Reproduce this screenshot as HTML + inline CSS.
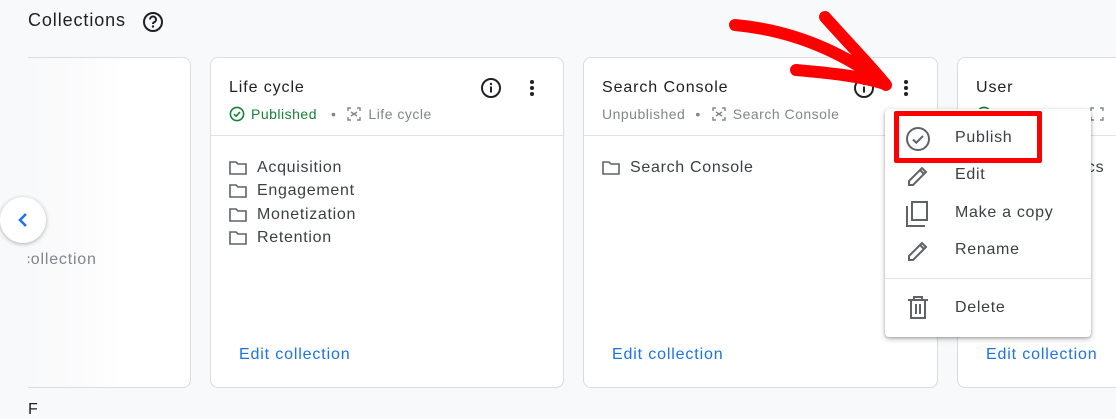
<!DOCTYPE html>
<html><head><style>
*{margin:0;padding:0;box-sizing:border-box}
body{width:1116px;height:406px;overflow:hidden;background:#f8f9fa;font-family:"Liberation Sans",Arial,sans-serif;position:relative;color:#3c4043;letter-spacing:0.6px}
.abs{position:absolute}
.card{position:absolute;top:57px;height:331px;background:#fff;border:1px solid #dadce0;border-radius:8px;overflow:hidden}
.title{position:absolute;left:18px;top:21px;font-size:16px;color:#202124;letter-spacing:0.9px}
.sub{position:absolute;left:18px;top:48px;font-size:14px;color:#80868b;white-space:nowrap;display:flex;align-items:center;letter-spacing:0.5px}
.div{position:absolute;left:0;right:0;top:77px;border-top:1px solid #e3e3e3}
.item{position:absolute;left:18px;font-size:16px;color:#3c4043;display:flex;align-items:center;letter-spacing:0.7px}
.item svg{margin-right:10px}
.edit{position:absolute;left:28px;top:288px;font-size:16px;color:#1a73e8;letter-spacing:0.85px}
.menu{position:absolute;left:885px;top:109px;width:206px;height:228px;background:#fff;border-radius:4px;box-shadow:0 2px 6px rgba(0,0,0,.25),0 1px 2px rgba(0,0,0,.2)}
.mi{position:absolute;left:70px;font-size:16px;color:#3c4043;letter-spacing:0.7px}
</style></head><body>
<div class="abs" style="left:28px;top:10px;font-size:18px;color:#202124;letter-spacing:0.9px">Collections</div>
<svg class="abs" style="left:142px;top:11px" width="22" height="22" viewBox="0 0 22 22"><circle cx="11" cy="11" r="9" fill="none" stroke="#202124" stroke-width="2"/><path d="M8 8.5a3 3 0 1 1 4 2.8c-.8.4-1 .9-1 1.7" fill="none" stroke="#202124" stroke-width="2"/><circle cx="11" cy="15.5" r="1.2" fill="#202124"/></svg>

<div class="card" style="left:0;width:191px;border-left:none;border-radius:0 8px 8px 0;background:linear-gradient(90deg,#f8f9fa 28px,#fbfbfc 80px,#fff 120px)">
<div class="abs" style="left:22px;top:193px;font-size:16px;color:#80868b;letter-spacing:0.8px">collection</div></div>
<div class="abs" style="left:0;top:0;width:28px;height:406px;background:#f8f9fa"></div>
<div class="abs" style="left:0;top:197px;width:46px;height:46px;border-radius:50%;background:#fff;box-shadow:0 1px 4px rgba(0,0,0,.3)"></div>
<svg class="abs" style="left:15px;top:211px" width="16" height="18" viewBox="0 0 16 18"><path d="M11 3 5 9l6 6" fill="none" stroke="#1a73e8" stroke-width="2.5"/></svg>

<!-- card 2 -->
<div class="card" style="left:210px;width:354px">
<div class="title">Life cycle</div>
<svg class="abs" style="left:269px;top:19px" width="22" height="22" viewBox="0 0 22 22"><circle cx="11" cy="11" r="9" fill="none" stroke="#202124" stroke-width="2"/><rect x="10" y="9.5" width="2" height="6" fill="#202124"/><circle cx="11" cy="7" r="1.2" fill="#202124"/></svg>
<svg class="abs" style="left:318px;top:21px" width="6" height="18"><circle cx="3" cy="3" r="2" fill="#202124"/><circle cx="3" cy="9" r="2" fill="#202124"/><circle cx="3" cy="15" r="2" fill="#202124"/></svg>
<div class="sub"><svg width="16" height="16" viewBox="0 0 16 16" style="margin-right:6px"><circle cx="8" cy="8" r="6.6" fill="none" stroke="#188038" stroke-width="1.6"/><path d="M5 8.2 7.1 10.2 11 6" fill="none" stroke="#188038" stroke-width="1.6"/></svg><span style="color:#188038">Published</span><span style="margin:0 10px 0 14px">•</span><svg width="16" height="16" viewBox="0 0 16 16" style="margin-right:6px"><path d="M2 5V2h3M11 2h3v3M14 11v3h-3M5 14H2v-3M5 6l6 4M11 6 5 10" fill="none" stroke="#80868b" stroke-width="1.4"/></svg>Life cycle</div>
<div class="div"></div>
<div class="item" style="top:101px"><svg width="18" height="14" viewBox="0 0 18 14"><path d="M1 1h6l2 2h8v10H1z" fill="none" stroke="#5f6368" stroke-width="1.6"/></svg>Acquisition</div>
<div class="item" style="top:124px"><svg width="18" height="14" viewBox="0 0 18 14"><path d="M1 1h6l2 2h8v10H1z" fill="none" stroke="#5f6368" stroke-width="1.6"/></svg>Engagement</div>
<div class="item" style="top:148px"><svg width="18" height="14" viewBox="0 0 18 14"><path d="M1 1h6l2 2h8v10H1z" fill="none" stroke="#5f6368" stroke-width="1.6"/></svg>Monetization</div>
<div class="item" style="top:171px"><svg width="18" height="14" viewBox="0 0 18 14"><path d="M1 1h6l2 2h8v10H1z" fill="none" stroke="#5f6368" stroke-width="1.6"/></svg>Retention</div>
<div class="edit">Edit collection</div>
</div>

<!-- card 3 -->
<div class="card" style="left:583px;width:355px">
<div class="title">Search Console</div>
<svg class="abs" style="left:269px;top:19px" width="22" height="22" viewBox="0 0 22 22"><circle cx="11" cy="11" r="9" fill="none" stroke="#202124" stroke-width="2"/><rect x="10" y="9.5" width="2" height="6" fill="#202124"/><circle cx="11" cy="7" r="1.2" fill="#202124"/></svg>
<svg class="abs" style="left:319px;top:21px" width="6" height="18"><circle cx="3" cy="3" r="2" fill="#202124"/><circle cx="3" cy="9" r="2" fill="#202124"/><circle cx="3" cy="15" r="2" fill="#202124"/></svg>
<div class="sub">Unpublished<span style="margin:0 10px">•</span><svg width="16" height="16" viewBox="0 0 16 16" style="margin-right:6px"><path d="M2 5V2h3M11 2h3v3M14 11v3h-3M5 14H2v-3M5 6l6 4M11 6 5 10" fill="none" stroke="#80868b" stroke-width="1.4"/></svg>Search Console</div>
<div class="div"></div>
<div class="item" style="top:101px"><svg width="18" height="14" viewBox="0 0 18 14"><path d="M1 1h6l2 2h8v10H1z" fill="none" stroke="#5f6368" stroke-width="1.6"/></svg>Search Console</div>
<div class="edit">Edit collection</div>
</div>

<!-- card 4 -->
<div class="card" style="left:957px;width:200px">
<div class="title">User</div>
<div class="sub"><svg width="16" height="16" viewBox="0 0 16 16" style="margin-right:6px"><circle cx="8" cy="8" r="6.6" fill="none" stroke="#188038" stroke-width="1.6"/></svg><span style="color:#188038">Published</span><span style="margin:0 10px">•</span><svg width="16" height="16" viewBox="0 0 16 16"><path d="M2 5V2h3M11 2h3v3M14 11v3h-3M5 14H2v-3" fill="none" stroke="#80868b" stroke-width="1.4"/></svg></div>
<div class="div"></div>
<div class="item" style="top:101px;left:76px">Analytics</div>
<div class="edit">Edit collection</div>
</div>

<div class="abs" style="left:28px;top:401px;font-size:16px;color:#202124">F</div>

<!-- menu -->
<div class="menu">
<svg class="abs" style="left:20px;top:17px" width="26" height="26" viewBox="0 0 26 26"><circle cx="13" cy="13" r="11" fill="none" stroke="#5f6368" stroke-width="2"/><path d="M8 13.5l3.3 3.2L18 10" fill="none" stroke="#5f6368" stroke-width="2"/></svg>
<div class="mi" style="top:20px">Publish</div>
<svg class="abs" style="left:21px;top:55px" width="24" height="24" viewBox="0 0 24 24"><path d="M3 21v-4L16 4l4 4L7 21zM14 6l4 4" fill="none" stroke="#5f6368" stroke-width="2"/></svg>
<div class="mi" style="top:57px">Edit</div>
<svg class="abs" style="left:20px;top:91px" width="24" height="28" viewBox="0 0 24 28"><path d="M2 6v20h18" fill="none" stroke="#5f6368" stroke-width="2"/><rect x="7" y="2" width="15" height="18" fill="none" stroke="#5f6368" stroke-width="2"/></svg>
<div class="mi" style="top:95px">Make a copy</div>
<svg class="abs" style="left:21px;top:130px" width="24" height="24" viewBox="0 0 24 24"><path d="M3 21v-4L16 4l4 4L7 21zM14 6l4 4" fill="none" stroke="#5f6368" stroke-width="2"/></svg>
<div class="mi" style="top:132px">Rename</div>
<div class="abs" style="left:0;right:0;top:169px;border-top:1px solid #e0e0e0"></div>
<svg class="abs" style="left:22px;top:187px" width="22" height="24" viewBox="0 0 22 24"><path d="M1 4h20M7 4V1h8v3M4 4v18h14V4M9 8v10M13 8v10" fill="none" stroke="#5f6368" stroke-width="2"/></svg>
<div class="mi" style="top:190px">Delete</div>
</div>
<div class="abs" style="left:894px;top:111px;width:148px;height:52px;border:5px solid #f00;border-radius:2px"></div>

<!-- arrow -->
<svg class="abs" style="left:0;top:0" width="1116" height="406"><g fill="none" stroke="#f00" stroke-width="12" stroke-linecap="round" stroke-linejoin="round"><path d="M735 25C790 30 840 50 885 84"/><path d="M825 17C850 45 870 65 886 85"/><path d="M796 70C830 73 860 76 885 84"/></g></svg>
</body></html>
